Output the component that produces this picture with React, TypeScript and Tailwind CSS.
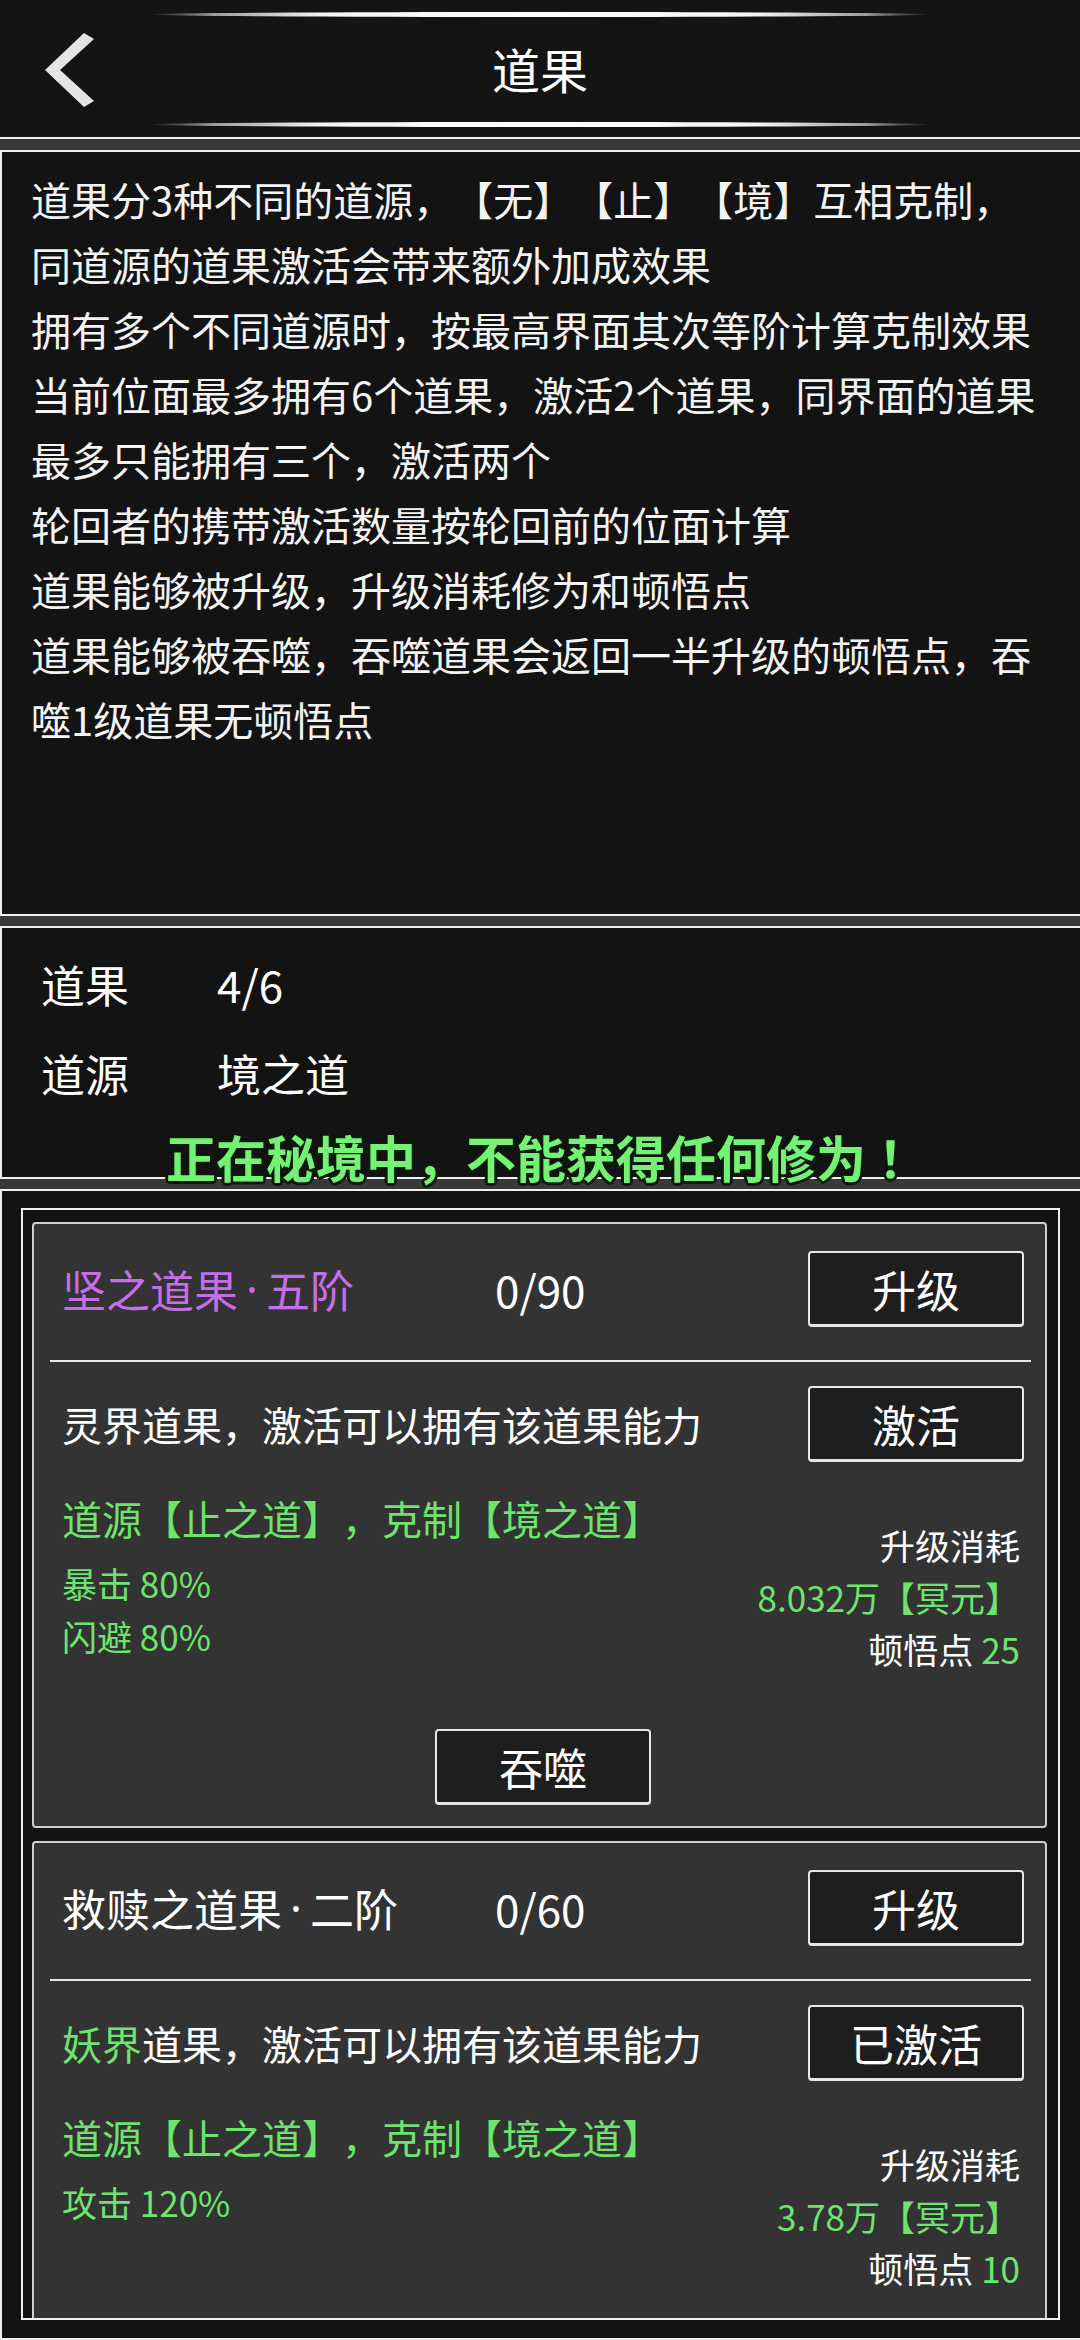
import React from "react";

const GREEN = "text-[#6ee46e]";

function Btn({ children }: { children: React.ReactNode }) {
  return (
    <div className="w-[216px] h-[76px] flex items-center justify-center bg-[#1e1e1e] border-2 border-b-[3px] border-[#e6e6e6] rounded-[4px] text-[44px] text-white leading-none">
      {children}
    </div>
  );
}

function GlowLine() {
  return (
    <div className="w-[780px] h-[5px] rounded-[50%] bg-[linear-gradient(90deg,rgba(255,255,255,0)_0%,#9a9a9a_8%,#f4f4f4_22%,#ffffff_50%,#f4f4f4_78%,#9a9a9a_92%,rgba(255,255,255,0)_100%)]" />
  );
}

type CardProps = {
  name: string;
  rank: string;
  titleClass: string;
  count: string;
  realm: string;
  realmGreen: boolean;
  activeLabel: string;
  stats: string[];
  cost: string;
  points: string;
};

function Card({ name, rank, titleClass, count, realm, realmGreen, activeLabel, stats, cost, points }: CardProps) {
  return (
    <div className="shrink-0 border-2 border-[#cfcfcf] rounded-[4px] bg-[#333333] pl-[28px] pr-[21px] pt-[27px] pb-[21px]">
      <div className="flex items-center">
        <div className={`w-[433px] text-[44px] leading-none whitespace-nowrap flex items-center ${titleClass}`}>
          <span>{name}</span>
          <span className="inline-block w-[28px] text-center font-['Noto_Sans',sans-serif]">·</span>
          <span>{rank}</span>
        </div>
        <div className="text-[44px] text-white leading-none">{count}</div>
        <div className="ml-auto">
          <Btn>升级</Btn>
        </div>
      </div>
      <div className="mt-[33px] h-[2px] bg-[#e8e8e8] ml-[-12px] mr-[-7px]" />
      <div className="mt-[24px] flex items-center">
        <div className="text-[40px] text-white leading-none whitespace-nowrap">
          <span className={realmGreen ? GREEN : ""}>{realm}</span>道果，激活可以拥有该道果能力
        </div>
        <div className="ml-auto">
          <Btn>{activeLabel}</Btn>
        </div>
      </div>
      <div className="flex justify-between">
        <div className="mt-[28px]">
          <div className={`text-[40px] leading-[56px] whitespace-nowrap ${GREEN}`}>道源【止之道】，克制【境之道】</div>
          <div className="mt-[10px]">
            {stats.map((s) => (
              <div key={s} className={`text-[35px] leading-[53px] whitespace-nowrap ${GREEN}`}>
                {s}
              </div>
            ))}
          </div>
        </div>
        <div className="mt-[57px] pr-[4px] text-right text-[35px] leading-[52px] whitespace-nowrap text-white">
          <div>升级消耗</div>
          <div className={GREEN}>{cost}</div>
          <div>
            顿悟点 <span className={GREEN}>{points}</span>
          </div>
        </div>
      </div>
      <div className="mt-[54px] flex justify-center">
        <Btn>吞噬</Btn>
      </div>
    </div>
  );
}

export default function App() {
  const lines = [
    "道果分3种不同的道源，【无】【止】【境】互相克制，",
    "同道源的道果激活会带来额外加成效果",
    "拥有多个不同道源时，按最高界面其次等阶计算克制效果",
    "当前位面最多拥有6个道果，激活2个道果，同界面的道果",
    "最多只能拥有三个，激活两个",
    "轮回者的携带激活数量按轮回前的位面计算",
    "道果能够被升级，升级消耗修为和顿悟点",
    "道果能够被吞噬，吞噬道果会返回一半升级的顿悟点，吞",
    "噬1级道果无顿悟点",
  ];
  return (
    <div className="w-[1080px] h-[2340px] overflow-hidden bg-[#393939] flex flex-col font-['Noto_Sans_CJK_SC','Noto_Sans',sans-serif] [text-spacing-trim:space-all] text-white">
      {/* Header */}
      <div className="relative h-[139px] shrink-0 bg-[#141414] border-b-2 border-[#f0f0f0] flex flex-col items-center pt-[12px] pb-[10px]">
        <GlowLine />
        <div className="flex-1 flex items-center justify-center text-[48px] leading-none text-white pb-[4px]">道果</div>
        <GlowLine />
        <svg className="absolute left-[40px] top-[30px]" width="60" height="80" viewBox="0 0 60 80">
          <polygon points="44,3 54,9 20,40 54,71 44,77 5,40" fill="#e4e4e4" />
        </svg>
      </div>
      <div className="h-[11px] shrink-0" />
      {/* Description panel */}
      <div className="h-[766px] shrink-0 bg-[#131313] border-y-2 border-l-2 border-[#f0f0f0] pl-[29px] pt-[15px]">
        {lines.map((l) => (
          <div key={l} className="text-[40px] leading-[65px] whitespace-nowrap text-[#f4f4f4]">
            {l}
          </div>
        ))}
      </div>
      <div className="h-[10px] shrink-0" />
      {/* Stats panel */}
      <div className="relative h-[253px] shrink-0 bg-[#131313] border-y-2 border-l-2 border-[#f0f0f0] pl-[39px] pt-[12px]">
        <div className="flex text-[44px] leading-[89px]">
          <div className="w-[176px]">道果</div>
          <div>4/6</div>
        </div>
        <div className="flex text-[44px] leading-[89px]">
          <div className="w-[176px]">道源</div>
          <div>境之道</div>
        </div>
        <div className="absolute left-0 right-0 top-[202px] pl-[12px] text-center text-[50px] leading-[52px] font-bold text-[#74f274] whitespace-nowrap [text-shadow:-2px_-2px_0_#0c180c,2px_-2px_0_#0c180c,-2px_2px_0_#0c180c,2px_2px_0_#0c180c,0_-3px_0_#0c180c,0_3px_0_#0c180c,-3px_0_0_#0c180c,3px_0_0_#0c180c]">
          正在秘境中，不能获得任何修为<span className="ml-[12px]">！</span>
        </div>
      </div>
      <div className="h-[10px] shrink-0" />
      {/* List panel */}
      <div className="flex-1 bg-[#131313] border-y-2 border-l-2 border-[#f0f0f0] pl-[19px] pr-[20px] pt-[17px] pb-[18px]">
        <div className="h-[1112px] border-2 border-[#f0f0f0] overflow-hidden pl-[9px] pr-[11px] pt-[12px] flex flex-col gap-[13px]">
          <Card
            name="坚之道果"
            rank="五阶"
            titleClass="text-[#c66ee8]"
            count="0/90"
            realm="灵界"
            realmGreen={false}
            activeLabel="激活"
            stats={["暴击 80%", "闪避 80%"]}
            cost="8.032万【冥元】"
            points="25"
          />
          <Card
            name="救赎之道果"
            rank="二阶"
            titleClass="text-white"
            count="0/60"
            realm="妖界"
            realmGreen={true}
            activeLabel="已激活"
            stats={["攻击 120%"]}
            cost="3.78万【冥元】"
            points="10"
          />
        </div>
      </div>
    </div>
  );
}
